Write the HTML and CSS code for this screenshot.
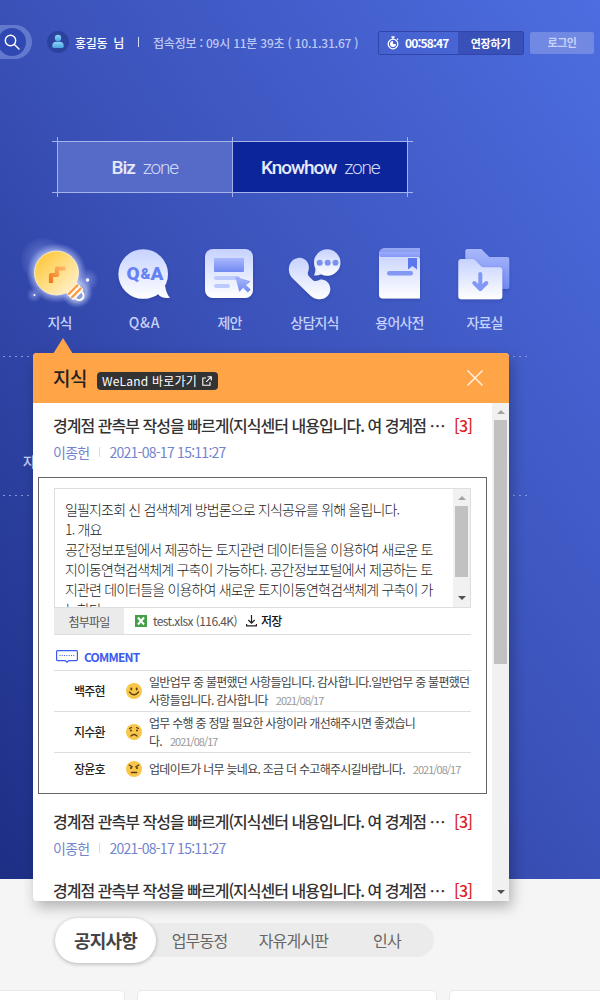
FILE: index.html
```html
<!DOCTYPE html>
<html lang="ko">
<head>
<meta charset="utf-8">
<title>Knowhow zone</title>
<link rel="stylesheet" href="styles.css">
</head>
<body>
<div class="hero">
  <header class="topbar">
    <div class="search"><div class="search-btn"><svg width="16" height="16" viewBox="0 0 16 16" fill="none" stroke="#fff" stroke-width="1.4" stroke-linecap="round"><circle cx="6.5" cy="6.5" r="5.2"/><path d="M10.4 10.4L15 15"/></svg></div></div>
    <div class="avatar"><svg width="22" height="22" viewBox="0 0 22 22"><defs><linearGradient id="av" x1="0" y1="0" x2="0" y2="1"><stop offset="0" stop-color="#8ed6f6"/><stop offset="1" stop-color="#4ba4e2"/></linearGradient></defs><circle cx="11" cy="7" r="3.2" fill="url(#av)"/><path d="M5.200 15.200q0-4.400 4.400-4.400h2.800q4.400 0 4.400 4.400 0 1.800-1.800 1.800H7q-1.800 0-1.800-1.800z" fill="url(#av)"/></svg></div>
    <div class="user">홍길동&nbsp; 님</div>
    <div class="bar"></div>
    <div class="conn">접속정보 : 09시 11분 39초 ( 10.1.31.67 )</div>
    <div class="session">
      <div class="timer"><svg width="12" height="14" viewBox="0 0 12 14" fill="none" stroke="#fff" stroke-width="1.3"><circle cx="6" cy="8" r="4.8"/><path d="M4.4 1h3.2M6 1v2M10 2.8l1 1"/><path d="M6 5v3h3A3 3 0 1 1 6 5z" fill="#fff" stroke="none"/></svg><span>00:58:47</span></div>
      <div class="extend">연장하기</div>
    </div>
    <div class="login">로그인</div>
  </header>

  <div class="zones">
    <div class="zone biz"><b>Biz</b><span>zone</span></div>
    <div class="zone know"><b>Knowhow</b><span>zone</span></div>
    <i class="guide h top"></i><i class="guide h bot"></i>
    <i class="guide v g1"></i><i class="guide v g2"></i><i class="guide v g3"></i>
  </div>

  <svg width="0" height="0" class="defs"><defs>
    <linearGradient id="w" x1="0" y1="0" x2="0" y2="1"><stop offset="0" stop-color="#c6d2ff"/><stop offset="1" stop-color="#fff"/></linearGradient>
    <linearGradient id="bub" gradientUnits="userSpaceOnUse" x1="0" y1="9" x2="0" y2="59"><stop offset="0" stop-color="#c6d2ff"/><stop offset="1" stop-color="#fff"/></linearGradient>
    <linearGradient id="p" x1="0" y1="0" x2="0" y2="1"><stop offset="0" stop-color="#a9b8fb"/><stop offset="1" stop-color="#7289f4"/></linearGradient>
    <linearGradient id="bulb" x1="0" y1="0" x2="1" y2="1"><stop offset=".1" stop-color="#ffc83a"/><stop offset="1" stop-color="#fff6dc"/></linearGradient>
    <linearGradient id="or" x1="1" y1="0" x2="0" y2="1"><stop offset="0" stop-color="#ffb868"/><stop offset="1" stop-color="#ee7a1c"/></linearGradient>
    <radialGradient id="glow"><stop offset=".6" stop-color="#dfe6ff" stop-opacity=".9"/><stop offset="1" stop-color="#a9baff" stop-opacity="0"/></radialGradient>
    <radialGradient id="soft"><stop offset="0" stop-color="#b8c6ff" stop-opacity=".5"/><stop offset="1" stop-color="#93a5f0" stop-opacity=".05"/></radialGradient>
    <filter id="sh" x="-20%" y="-20%" width="140%" height="150%"><feDropShadow dx="0" dy="1.5" stdDeviation="1.5" flood-color="#20308c" flood-opacity=".4"/></filter>
  </defs></svg>

  <nav class="menu">
    <a class="item"><svg class="ico" viewBox="0 0 86 72">
      <circle cx="26" cy="20" r="22" fill="url(#soft)"/><circle cx="70" cy="40" r="11" fill="url(#soft)"/><circle cx="17" cy="55" r="7" fill="url(#soft)"/>
      <circle cx="39.500" cy="33" r="30" fill="url(#glow)"/><circle cx="60" cy="52" r="16" fill="url(#glow)" opacity=".6"/>
      <circle cx="70.500" cy="40" r="1.700" fill="#fff"/><circle cx="17.500" cy="55" r="1" fill="#fff"/>
      <g transform="translate(57.500 51) rotate(45)"><rect x="-5" y="-7.500" width="11" height="15" rx="2" fill="#fff"/><path d="M6-4.500a5 4.500 0 0 1 0 9" fill="none" stroke="#fff" stroke-width="2"/><path d="M-2-6V6M2.600-6V6" stroke="#ff9b3d" stroke-width="2.400" stroke-linecap="round"/></g>
      <circle cx="39.500" cy="33" r="22" fill="url(#bulb)" stroke="#fff5cf" stroke-width=".8"/>
      <path d="M34 43v-8h6v-6.500h8.500" fill="none" stroke="url(#or)" stroke-width="4.200" stroke-linejoin="round"/>
    </svg><span class="cap">지식</span></a>
    <a class="item"><svg class="ico" viewBox="0 0 86 72">
      <g filter="url(#sh)" fill="url(#bub)"><circle cx="41.200" cy="34" r="24.800"/><path d="M52 56.500q3-1.500 4-2.500 3 4.500 12 3.800-3.500-3.500-5-11.800l-10 2z"/></g>
      <g class="qa"><text x="24.500" y="40" textLength="13">Q</text><text x="38.500" y="38.500" class="amp" textLength="9">&amp;</text><text x="48.500" y="40" textLength="13">A</text></g>
    </svg><span class="cap wide">Q&amp;A</span></a>
    <a class="item"><svg class="ico" viewBox="0 0 86 72">
      <rect filter="url(#sh)" x="18" y="9" width="48" height="49" rx="8" fill="url(#w)"/>
      <rect x="27" y="18" width="30" height="14" rx="1" fill="url(#p)"/><rect x="27" y="36" width="26" height="4" rx="2" fill="#bccafe"/><rect x="27" y="44" width="16" height="4" rx="2" fill="#bccafe"/>
      <path fill="url(#p)" stroke="#6f88f2" stroke-width=".5" d="M49 37.500l14 4-4.500 3.500 5 4.600-2.600 2.600-4.900-4.700-3.500 3.900z"/>
    </svg><span class="cap">제안</span></a>
    <a class="item"><svg class="ico" viewBox="0 0 86 72">
      <path filter="url(#sh)" transform="translate(-1.200 .5)" fill="url(#w)" d="M27 17.500c6-1.500 12 4 11 11-.8 3.500-1.800 5 .3 7.500l3.200 3.200c2 1.800 3.500 1.500 7 .2 5-1.600 11 3 11 9 0 6-5 10.500-11 10.300-3.500-.1-6.500-1.300-9-3.700L22 38c-3.500-3.500-4.600-8-3.500-12.500 1-4 4-7.200 8.500-8z"/>
      <g filter="url(#sh)" fill="url(#w)"><circle cx="55.200" cy="22.500" r="13.200"/><path fill="#e9eeff" d="M43.500 28.500q.2 3.500-1.500 7 4.500 0 8-1.600z"/></g>
      <circle cx="47.700" cy="22.700" r="3" fill="#7b91ee"/><circle cx="55.700" cy="22.700" r="3" fill="#7b91ee"/><circle cx="63.500" cy="22.700" r="3" fill="#7b91ee"/>
    </svg><span class="cap">상담지식</span></a>
    <a class="item"><svg class="ico" viewBox="0 0 86 72">
      <path filter="url(#sh)" fill="url(#w)" d="M22 12h41v46.500H26q-4 0-4-4z"/>
      <path fill="url(#p)" opacity=".85" d="M27 8h36v10H26q-4 0-4-4.500T27 8z"/><path d="M23 17.500h39" stroke="#e6ecff" stroke-width=".8"/>
      <path fill="#5b78ec" d="M51 18h9v11.500l-4.500-3.500-4.500 3.500z"/><rect x="30" y="31" width="26" height="4.500" rx="2.200" fill="#8298f4"/>
    </svg><span class="cap">용어사전</span></a>
    <a class="item"><svg class="ico" viewBox="0 0 86 72"><g transform="translate(-1.700 0)">
      <path filter="url(#sh)" fill="url(#p)" d="M25 11q0-2 2-2h14l8 8h18q2 0 2 2v28q0 2-2 2H25z"/>
      <path filter="url(#sh)" fill="url(#w)" d="M18 22q0-3 3-3h11q2 0 3 1.200l5.500 5.800q1 1.200 3 1.200h15.500q3 0 3 3v26q0 3-3 3H21q-3 0-3-3z"/>
      <path d="M40 34v14M34 43l6 6 6-6" fill="none" stroke="#8199f5" stroke-width="4" stroke-linecap="round" stroke-linejoin="round"/></g>
    </svg><span class="cap">자료실</span></a>
  </nav>
  <div class="band"><span>자</span></div>
</div>

<section class="lower">
  <div class="tabs"><div class="tab on">공지사항</div><div class="tab t2">업무동정</div><div class="tab t3">자유게시판</div><div class="tab t4">인사</div></div>
  <div class="cards"><div class="card first"></div><div class="card"></div><div class="card last"></div></div>
</section>

<section class="popup">
  <i class="arrow"></i>
  <div class="p-head">
    <h2>지식</h2>
    <div class="chip"><span>WeLand 바로가기</span><svg width="10" height="10" viewBox="0 0 10 10" fill="none" stroke="#fff" stroke-width="1.100"><path d="M4 2H.8v7.200H8V6M5.500.7h3.800v3.800M9.200.8L4.200 5.800"/></svg></div>
    <svg class="close" width="18" height="18" viewBox="0 0 18 18" stroke="#fff0dc" stroke-width="1.500"><path d="M1.500 1.500l15 15M16.500 1.500l-15 15"/></svg>
  </div>
  <div class="p-body">
    <div class="list">
      <div class="post">
        <div class="title"><span class="tt">경계점 관측부 작성을 빠르게(지식센터 내용입니다. 여 경계점 ⋯</span><span class="cnt">[3]</span></div>
        <div class="meta"><span>이종헌</span><i></i><span>2021-08-17 15:11:27</span></div>
      </div>
      <div class="detail">
        <div class="text">
          <div class="copy">일필지조회 신 검색체계 방법론으로 지식공유를 위해 올립니다.<br>1. 개요<br>공간정보포털에서 제공하는 토지관련 데이터들을 이용하여 새로운 토<br>지이동연혁검색체계 구축이 가능하다. 공간정보포털에서 제공하는 토<br>지관련 데이터들을 이용하여 새로운 토지이동연혁검색체계 구축이 가<br>능하다.</div>
          <div class="scroll"><i class="up"></i><b class="thumb small"></b><i class="down"></i></div>
        </div>
        <div class="file"><div class="flabel">첨부파일</div>
          <svg class="xls" width="12" height="12" viewBox="0 0 12 12"><rect width="12" height="12" fill="#43a047"/><path d="M3 2.500l6 7M9 2.500l-6 7" stroke="#fff" stroke-width="2"/></svg>
          <span class="fname">test.xlsx (116.4K)</span>
          <svg class="dl" width="11" height="12" viewBox="0 0 11 12" fill="none" stroke="#222" stroke-width="1.200"><path d="M5.500 0v8M2.300 5l3.200 3.200L8.700 5M.6 9v1.900h9.800V9"/></svg><span class="save">저장</span>
        </div>
        <div class="chead"><svg width="22" height="13" viewBox="0 0 22 13" fill="none" stroke="#3c5cf0" stroke-width="1.200"><path d="M1.600.6h18.800q1 0 1 1v8q0 1-1 1h-7.600L11 12.300l-1.800-1.700H1.600q-1 0-1-1v-8q0-1 1-1z"/><path d="M3.500 5.500h15" stroke-dasharray="1 1.300"/></svg><span>COMMENT</span></div>
        <div class="row"><div class="name">백주현</div><svg class="face" viewBox="0 0 16 16"><circle cx="8" cy="8" r="8" fill="#f8c64a"/><ellipse cx="5.300" cy="6" rx="1" ry="1.400" fill="#5a3d10"/><ellipse cx="10.700" cy="6" rx="1" ry="1.400" fill="#5a3d10"/><path d="M3.500 9q4.500 5.500 9 0" fill="none" stroke="#5a3d10" stroke-width="1.300" stroke-linecap="round"/></svg><div class="msg">일반업무 중 불편했던 사항들입니다. 감사합니다.일반업무 중 불편했던<br>사항들입니다. 감사합니다<em>2021/08/17</em></div></div>
        <div class="row"><div class="name">지수환</div><svg class="face" viewBox="0 0 16 16"><circle cx="8" cy="8" r="8" fill="#f8c64a"/><circle cx="5" cy="6.500" r="1" fill="#5a3d10"/><circle cx="11" cy="6.500" r="1" fill="#5a3d10"/><path d="M3.500 4.500l2-1M12.500 4.500l-2-1M5 12q3-3 6 0" fill="none" stroke="#5a3d10" stroke-width="1.200" stroke-linecap="round"/></svg><div class="msg">업무 수행 중 정말 필요한 사항이라 개선해주시면 좋겠습니<br>다.<em>2021/08/17</em></div></div>
        <div class="row one"><div class="name">장윤호</div><svg class="face" viewBox="0 0 16 16"><circle cx="8" cy="8" r="8" fill="#f8c64a"/><circle cx="5" cy="7" r="1.100" fill="#5a3d10"/><circle cx="11" cy="7" r="1.100" fill="#5a3d10"/><path d="M3.200 4l3 1.800M12.800 4l-3 1.800M5.300 11.500h5.400" fill="none" stroke="#5a3d10" stroke-width="1.300" stroke-linecap="round"/></svg><div class="msg">업데이트가 너무 늦네요. 조금 더 수고해주시길바랍니다.<em>2021/08/17</em></div></div>
      </div>
      <div class="post">
        <div class="title"><span class="tt">경계점 관측부 작성을 빠르게(지식센터 내용입니다. 여 경계점 ⋯</span><span class="cnt">[3]</span></div>
        <div class="meta"><span>이종헌</span><i></i><span>2021-08-17 15:11:27</span></div>
      </div>
      <div class="post">
        <div class="title"><span class="tt">경계점 관측부 작성을 빠르게(지식센터 내용입니다. 여 경계점 ⋯</span><span class="cnt">[3]</span></div>
      </div>
    </div>
    <div class="scroll outer"><i class="up"></i><b class="thumb"></b><i class="down"></i></div>
  </div>
</section>
</body>
</html>
```

FILE: styles.css
```css
* { box-sizing: border-box; }
body {
  margin: 0; position: relative; width: 600px; height: 1000px; overflow: hidden;
  background: #f5f5f5; font-family: "Noto Sans CJK KR", sans-serif;
  letter-spacing: -0.8px; white-space: nowrap;
}
.hero { height: 879px; background: linear-gradient(to top right, #1d2e85, #3a51b8 50%, #4d6de0); }

.topbar { display: flex; align-items: center; height: 84px; color: #fff; font-size: 12px; line-height: 18px; }
.topbar > div { flex: none; }
.search { width: 32px; height: 34px; border-radius: 0 17px 17px 0; background: #6379cd; overflow: hidden; display: flex; align-items: center; }
.search-btn { width: 28px; height: 28px; margin-left: -2px; border-radius: 50%; background: #3048b4; display: flex; align-items: center; justify-content: center; }
.avatar { width: 22px; height: 22px; margin-left: 15px; border-radius: 50%; background: #2b429f; }
.user { width: 63px; padding: 2px 0 0 6px; font-weight: 500; letter-spacing: -0.3px; }
.bar { width: 1px; height: 10px; background: #d5dcf8; margin-left: 6px; }
.conn { width: 239px; padding: 2px 0 0 14px; color: #bcc8f4; font-weight: 500; letter-spacing: -0.22px; }
.session { display: flex; width: 146px; height: 24px; margin-top: 2px; border: 1px solid #2f46a8; border-radius: 2px; }
.timer { display: flex; align-items: center; gap: 6px; width: 79px; padding-left: 8px; font-weight: 700; letter-spacing: -0.07em; }
.extend { flex: 1; background: #3950b8; text-align: center; line-height: 22px; font-size: 11px; font-weight: 700; letter-spacing: -0.02em; }
.login { width: 64px; height: 22px; margin: 2px 0 0 6px; border-radius: 2px; background: #7189e3; color: #c8d3fa; text-align: center; line-height: 21px; font-size: 11px; font-weight: 700; letter-spacing: -0.04em; }

.zones { position: relative; display: flex; width: 351px; height: 52px; margin: 57px 0 0 57px; font-family: Roboto, sans-serif; font-size: 19px; }
.zone { flex: 1; display: flex; align-items: center; justify-content: center; gap: 8px; color: #e6e9fa; letter-spacing: -1.1px; }
.zone b { font-weight: 500; }
.zone span { font-weight: 300; color: #d2d9f7; letter-spacing: -1.2px; }
.biz { background: #556bc7; }
.know { background: #0d259a; }
.guide { position: absolute; background: #a5b2ec; }
.h { left: -5px; width: 361px; height: 1px; }
.v { top: -4px; height: 60px; width: 1px; }
.top { top: 0; } .bot { bottom: 0; }
.g1 { left: 0; } .g2 { left: 175px; } .g3 { right: 0; }

.defs { display: block; }
.menu { display: flex; margin: 47px 0 0 17px; height: 116px; }
.item { width: 85px; display: flex; flex-direction: column; align-items: center; }
.ico { width: 86px; height: 72px; flex: none; overflow: visible; }
.cap { font-size: 14px; font-weight: 500; line-height: 20px; color: #c5d1fc; }
.wide { letter-spacing: 0.06em; }
.qa { font: 900 19px Roboto, sans-serif; letter-spacing: 0; fill: #6681f3; }
.amp { font-size: 15px; }
.band {
  width: 527px; height: 140px; padding: 95px 0 0 23px; font-size: 14px; line-height: 20px; font-weight: 500; color: #c5d1fc;
  background:
    repeating-linear-gradient(to right, transparent 0 3px, #8496dc 3px 5px, transparent 5px 6px) 0 0 / 100% 1px no-repeat,
    repeating-linear-gradient(to right, transparent 0 3px, #8496dc 3px 5px, transparent 5px 6px) 0 100% / 100% 1px no-repeat;
}

.lower { height: 121px; padding-top: 44px; }
.tabs { display: flex; align-items: center; width: 379px; height: 34px; margin-left: 55px; border-radius: 17px; background: #ebebeb; color: #666; font-size: 16px; text-align: center; line-height: 24px; }
.on { width: 101px; height: 45px; line-height: 44px; border-radius: 23px; background: #fff; box-shadow: 0 1px 4px rgba(0,0,0,.28); font-size: 18px; font-weight: 700; color: #444; }
.t2 { width: 87px; } .t3 { width: 101px; } .t4 { width: 86px; }
.cards { display: flex; gap: 12px; margin-top: 33px; }
.card { width: 300px; height: 40px; flex: none; border: 1px solid #e8e8e8; border-radius: 5px; background: #fff; }
.first { width: 125px; border-left: 0; border-top-left-radius: 0; }
.last { width: 170px; }

.popup { position: absolute; left: 33px; top: 353px; width: 476px; height: 548px; border-radius: 4px; background: #fff; box-shadow: 3px 6px 14px rgba(0,0,0,.28); }
.arrow { position: absolute; left: 20px; top: -15px; border: solid transparent; border-width: 0 10px 16px; border-bottom-color: #ffa548; }
.p-head { display: flex; align-items: center; height: 50px; padding: 0 25px 0 20px; background: #ffa548; border-radius: 4px 4px 0 0; }
.p-head h2 { margin: 0; width: 44px; font-size: 19px; line-height: 28px; font-weight: 500; color: #222; letter-spacing: -0.4px; }
.chip { display: flex; align-items: center; width: 121px; height: 18px; margin-top: 6px; padding-left: 5px; gap: 5px; border-radius: 4px; background: #333; color: #fff; font-size: 12px; line-height: 18px; letter-spacing: 0.2px; }
.close { margin-left: auto; }
.p-body { display: flex; height: 498px; overflow: hidden; }
.list { width: 459px; }
.post { height: 69px; padding: 10px 0 0 20px; }
.title { display: flex; font-size: 16px; line-height: 24px; color: #333; font-weight: 500; }
.tt { width: 401px; letter-spacing: -0.98px; }
.cnt { color: #dc2626; }
.meta { display: flex; align-items: center; margin-top: 5px; font-size: 14px; line-height: 20px; color: #7384cc; letter-spacing: -0.74px; }
.meta i { width: 1px; height: 10px; margin: 0 9px 0 10px; background: #dcdcdc; }
.detail { width: 449px; height: 317px; margin: 5px 0 5px 5px; padding: 10px 15px; border: 1px solid #666; }
.text { display: flex; height: 120px; border: 1px solid #dcdfe1; }
.copy { width: 398px; padding: 10px 0 0 10px; overflow: hidden; font-size: 14px; line-height: 20px; font-weight: 300; color: #222; letter-spacing: -0.84px; }
.scroll { display: flex; flex-direction: column; align-items: center; width: 17px; background: #f1f1f1; flex: none; }
.up { margin-top: 7px; border: solid transparent; border-width: 0 4px 4px; border-bottom-color: #a3a3a3; }
.thumb { width: 13px; height: 244px; margin-top: 6px; background: #c1c1c1; }
.small { height: 71px; }
.down { margin: auto 0 7px; border: solid transparent; border-width: 4px 4px 0; border-top-color: #505050; }
.file { display: flex; align-items: center; height: 27px; border-bottom: 1px solid #dcdfe1; font-size: 12px; line-height: 18px; color: #555; }
.flabel { width: 70px; height: 26px; line-height: 27px; background: #ebebeb; text-align: center; }
.xls { margin-left: 11px; }
.fname { width: 92px; padding-left: 6px; letter-spacing: -0.58px; }
.dl { margin-left: 7px; }
.save { margin-left: 4px; color: #111; font-weight: 500; }
.chead { display: flex; align-items: center; height: 35px; padding: 8px 0 0 2px; gap: 6px; font-size: 12px; line-height: 18px; font-weight: 700; color: #3c5cf0; }
.row { display: flex; align-items: center; height: 41px; border-top: 1px solid #dcdfe1; font-size: 12px; line-height: 18px; }
.one { height: 32px; }
.name { width: 72px; flex: none; padding-left: 20px; color: #222; font-weight: 500; }
.face { width: 16px; height: 16px; flex: none; margin-right: 7px; }
.msg { color: #444; letter-spacing: -0.72px; }
.msg em { margin-left: 8px; font-style: normal; font-size: 11px; letter-spacing: -1px; color: #999; }
```
